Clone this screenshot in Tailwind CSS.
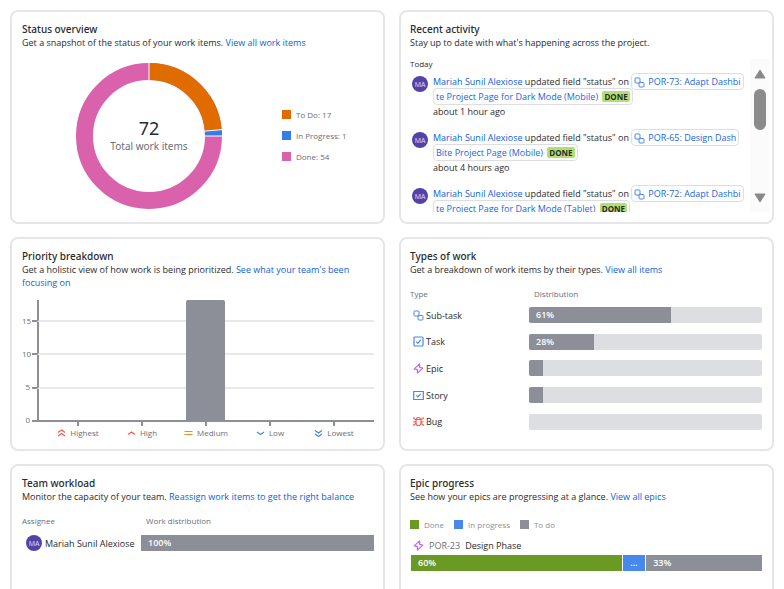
<!DOCTYPE html>
<html lang="en">
<head>
<meta charset="utf-8">
<meta name="viewport" content="width=device-width, initial-scale=1">
<title>Project summary</title>
<script src="https://cdn.jsdelivr.net/npm/@tailwindcss/browser@4"></script>
</head>
<body class="bg-white font-['Open_Sans','Noto_Sans',sans-serif] text-[9px] leading-[13px] text-[#292a2e]">
<svg class="hidden" aria-hidden="true">
  <symbol id="subtask" viewBox="0 0 11 11"><g fill="none" stroke="#4688ec"><rect x="1" y="1" width="5" height="5" rx="1"/><rect x="5" y="5.500" width="5" height="4.500" rx="1"/></g></symbol>
  <symbol id="task" viewBox="0 0 11 11"><g fill="none" stroke="#4688ec" stroke-width="1.200"><rect x="1" y="1" width="9" height="9" rx="1"/><path d="M3.200 5.600 4.900 7.300 7.800 3.700"/></g></symbol>
  <symbol id="epic" viewBox="0 0 11 11"><path d="M6.600 .9 1.200 5.900 4.400 6.700V10.100L9.800 5.100 6.600 4.300Z" fill="none" stroke="#bf63f3" stroke-width="1.200" stroke-linejoin="round"/></symbol>
  <symbol id="story" viewBox="0 0 11 11"><g fill="none" stroke="#4688ec" stroke-width="1.200"><path d="M.7 1.500H10.300V9.500H.7Z"/><path d="M3.400 5.400 4.900 6.900 7.600 3.900"/></g></symbol>
  <symbol id="bug" viewBox="0 0 11 11"><g fill="none" stroke="#f15b50" stroke-width="1.200"><path d="M3 3.500H8V7.500L6.700 9.500H4.300L3 7.500ZM3.500 3.500Q3.500 1.500 5.500 1.500T7.500 3.500M.8 1.200V2.500L3 3.800M10.200 1.200V2.500L8 3.800M.5 5.800H3M8 5.800H10.500M.8 10V8.800L3 7.500M10.200 10V8.800L8 7.500"/></g></symbol>
</svg>

<main class="grid h-screen auto-rows-[214px] grid-cols-2 gap-x-[14px] gap-y-[13px] overflow-hidden p-[10px]">

  <section class="flex flex-col rounded-lg border-2 border-[#e6e6e8] px-[10px] py-[11px]">
    <h2 class="font-['Noto_Sans',sans-serif] text-[10px] leading-[13px] font-medium">Status overview</h2>
    <p>Get a snapshot of the status of your work items. <a href="#" class="font-medium text-[#0c5fd8]">View all work items</a></p>
    <div class="mt-[14px] flex items-center gap-[60px] pl-[54px]">
      <div class="grid place-items-center">
        <svg class="col-start-1 row-start-1 size-[146px]" viewBox="0 0 146 146" role="img" aria-label="Work items by status">
          <circle cx="73" cy="73" r="64.500" fill="none" stroke="#da62ac" stroke-width="17"/>
          <path d="M73 8.500A64.500 64.500 0 0 1 137.250 67.380" fill="none" stroke="#e06c00" stroke-width="17"/>
          <path d="M137.250 67.380A64.500 64.500 0 0 1 137.500 73" fill="none" stroke="#357de8" stroke-width="17"/>
          <path d="M73 0V18M128 73H146M128 68.200 146 66.600" stroke="#fff" fill="none"/>
        </svg>
        <div class="col-start-1 row-start-1 text-center font-['Noto_Sans',sans-serif]">
          <div class="text-lg leading-5">72</div>
          <div class="text-[10px] leading-4 text-[#6b6e76]">Total work items</div>
        </div>
      </div>
      <ul class="mb-[2px] flex flex-col gap-2 text-[8px] text-[#6b6e76]">
        <li class="flex items-center gap-[5px]"><span class="size-[9px] bg-[#e06c00]"></span>To Do: 17</li>
        <li class="flex items-center gap-[5px]"><span class="size-[9px] bg-[#357de8]"></span>In Progress: 1</li>
        <li class="flex items-center gap-[5px]"><span class="size-[9px] bg-[#da62ac]"></span>Done: 54</li>
      </ul>
    </div>
  </section>

  <section class="flex flex-col rounded-lg border-2 border-[#e6e6e8] pt-[11px] pr-[2px] pb-[10px] pl-[9px]">
    <h2 class="font-['Noto_Sans',sans-serif] text-[10px] leading-[13px] font-medium">Recent activity</h2>
    <p>Stay up to date with what's happening across the project.</p>
    <div class="mt-[10px] flex min-h-0 flex-1">
      <div class="min-w-0 flex-1 overflow-hidden whitespace-nowrap">
        <h3 class="text-[8px] leading-[10px] font-medium">Today</h3>
        <ul class="mt-[5px] flex flex-col gap-[11px] leading-[15px]">
          <li class="flex gap-[5px]">
            <span class="mt-[2px] ml-[2px] grid size-4 shrink-0 place-items-center rounded-full bg-[#5243aa] text-[7px] leading-none text-white/80">MA</span>
            <div><a href="#" class="font-medium text-[#0c5fd8]">Mariah Sunil Alexiose</a> updated field "status" on <a href="#" class="rounded-sm border border-[#dddee1] box-decoration-clone px-[2px] py-px text-[#1868db]"><svg class="mr-[3px] inline size-[11px]"><use href="#subtask"/></svg>POR-73: Adapt Dashbi<br>te Project Page for Dark Mode (Mobile) <span class="ml-[2px] rounded-xs bg-[#b3df72] px-[2px] text-[8px] font-bold text-[#292a2e]">DONE</span></a><div>about 1 hour ago</div></div>
          </li>
          <li class="flex gap-[5px]">
            <span class="mt-[2px] ml-[2px] grid size-4 shrink-0 place-items-center rounded-full bg-[#5243aa] text-[7px] leading-none text-white/80">MA</span>
            <div><a href="#" class="font-medium text-[#0c5fd8]">Mariah Sunil Alexiose</a> updated field "status" on <a href="#" class="rounded-sm border border-[#dddee1] box-decoration-clone px-[2px] py-px text-[#1868db]"><svg class="mr-[3px] inline size-[11px]"><use href="#subtask"/></svg>POR-65: Design Dash<br>Bite Project Page (Mobile) <span class="ml-[2px] rounded-xs bg-[#b3df72] px-[2px] text-[8px] font-bold text-[#292a2e]">DONE</span></a><div>about 4 hours ago</div></div>
          </li>
          <li class="flex gap-[5px]">
            <span class="mt-[2px] ml-[2px] grid size-4 shrink-0 place-items-center rounded-full bg-[#5243aa] text-[7px] leading-none text-white/80">MA</span>
            <div><a href="#" class="font-medium text-[#0c5fd8]">Mariah Sunil Alexiose</a> updated field "status" on <a href="#" class="rounded-sm border border-[#dddee1] box-decoration-clone px-[2px] py-px text-[#1868db]"><svg class="mr-[3px] inline size-[11px]"><use href="#subtask"/></svg>POR-72: Adapt Dashbi<br>te Project Page for Dark Mode (Tablet) <span class="ml-[2px] rounded-xs bg-[#b3df72] px-[2px] text-[8px] font-bold text-[#292a2e]">DONE</span></a></div>
          </li>
        </ul>
      </div>
      <div class="flex w-5 shrink-0 flex-col items-center bg-[#fbfbfb] pt-[10px] pb-[9px]" aria-hidden="true">
        <svg class="h-[10px] w-3" viewBox="0 0 12 10"><path d="M6 1 11 9H1Z" fill="#888" stroke="#888" stroke-linejoin="round"/></svg>
        <span class="mt-[10px] h-[41px] w-3 rounded-full bg-[#8b8b8b]"></span>
        <svg class="mt-auto h-[10px] w-3" viewBox="0 0 12 10"><path d="M6 9 11 1H1Z" fill="#888" stroke="#888" stroke-linejoin="round"/></svg>
      </div>
    </div>
  </section>

  <section class="flex flex-col rounded-lg border-2 border-[#e6e6e8] py-[11px] pr-[9px] pl-[10px]">
    <h2 class="font-['Noto_Sans',sans-serif] text-[10px] leading-[13px] font-medium">Priority breakdown</h2>
    <p>Get a holistic view of how work is being prioritized. <a href="#" class="font-medium text-[#0c5fd8]">See what your team's been focusing on</a></p>
    <div class="mt-[11px] grid grid-cols-[8px_1fr] gap-x-[2px] text-[8px] text-[#6b6e76]">
      <div class="flex flex-col gap-5 pt-[14px] text-right">
        <span>15</span><span>10</span><span>5</span><span>0</span>
      </div>
      <div>
        <div class="grid">
          <div class="col-start-1 row-start-1 grid grid-cols-[5px_1fr] grid-rows-[22px_33px_34px_33px]">
            <span></span><span class="border-b-2 border-l-2 border-b-[#e8e8ea] border-l-[#8c8f97]"></span>
            <span class="-mt-[2px] border-t-2 border-[#8c8f97]"></span><span class="border-b-2 border-l-2 border-b-[#e8e8ea] border-l-[#8c8f97]"></span>
            <span class="-mt-[2px] border-t-2 border-[#8c8f97]"></span><span class="border-b-2 border-l-2 border-b-[#e8e8ea] border-l-[#8c8f97]"></span>
            <span class="-mt-[2px] border-y-2 border-[#8c8f97]"></span><span class="border-b-2 border-l-2 border-[#8c8f97]"></span>
          </div>
          <div class="col-start-1 row-start-1 flex items-end justify-center pb-[2px] pl-[5px]">
            <span class="h-full w-[39px] rounded-t-xs bg-[#8c8f97]"></span>
          </div>
        </div>
        <ul class="grid grid-cols-5 pr-2 pl-[14px] text-center">
          <li class="flex flex-col items-center"><span class="h-1 w-[2px] bg-[#8c8f97]"></span><span class="flex items-center gap-1"><svg class="size-[9px]" viewBox="0 0 9 9"><path d="M1 4.500 4.500 2 8 4.500M1 8 4.500 5.500 8 8" fill="none" stroke="#f15b50" stroke-width="1.200"/></svg>Highest</span></li>
          <li class="flex flex-col items-center"><span class="h-1 w-[2px] bg-[#8c8f97]"></span><span class="flex items-center gap-1"><svg class="size-[9px]" viewBox="0 0 9 9"><path d="M1 6.500 4.500 4 8 6.500" fill="none" stroke="#f15b50" stroke-width="1.200"/></svg>High</span></li>
          <li class="flex flex-col items-center"><span class="h-1 w-[2px] bg-[#8c8f97]"></span><span class="flex items-center gap-1"><svg class="size-[9px]" viewBox="0 0 9 9"><path d="M.5 3.500H8.500M.5 6.500H8.500" fill="none" stroke="#f18d13" stroke-width="1.200"/></svg>Medium</span></li>
          <li class="flex flex-col items-center"><span class="h-1 w-[2px] bg-[#8c8f97]"></span><span class="flex items-center gap-1"><svg class="size-[9px]" viewBox="0 0 9 9"><path d="M1 4 4.500 6.500 8 4" fill="none" stroke="#4688ec" stroke-width="1.200"/></svg>Low</span></li>
          <li class="flex flex-col items-center"><span class="h-1 w-[2px] bg-[#8c8f97]"></span><span class="flex items-center gap-1"><svg class="size-[9px]" viewBox="0 0 9 9"><path d="M1 2.500 4.500 5 8 2.500M1 6 4.500 8.500 8 6" fill="none" stroke="#4688ec" stroke-width="1.200"/></svg>Lowest</span></li>
        </ul>
      </div>
    </div>
  </section>

  <section class="flex flex-col rounded-lg border-2 border-[#e6e6e8] py-[11px] pr-[10px] pl-[9px]">
    <h2 class="font-['Noto_Sans',sans-serif] text-[10px] leading-[13px] font-medium">Types of work</h2>
    <p>Get a breakdown of work items by their types. <a href="#" class="font-medium text-[#0c5fd8]">View all items</a></p>
    <table class="mt-[11px] h-[148px] w-full">
      <thead class="text-left align-top text-[8px] leading-[13px] text-[#6b6e76]">
        <tr class="h-[15px]"><th class="w-[119px] font-medium">Type</th><th class="pl-[5px] font-medium">Distribution</th></tr>
      </thead>
      <tbody>
        <tr><td><span class="flex items-center gap-[2px] pl-[3px]"><svg class="size-[11px]"><use href="#subtask"/></svg>Sub-task</span></td><td><div class="h-4 overflow-hidden rounded-xs bg-[#dddee1]"><div class="h-4 bg-[#8c8f97] pl-[7px] leading-4 font-semibold text-white" style="width:61%">61%</div></div></td></tr>
        <tr><td><span class="flex items-center gap-[2px] pl-[3px]"><svg class="size-[11px]"><use href="#task"/></svg>Task</span></td><td><div class="h-4 overflow-hidden rounded-xs bg-[#dddee1]"><div class="h-4 bg-[#8c8f97] pl-[7px] leading-4 font-semibold text-white" style="width:28%">28%</div></div></td></tr>
        <tr><td><span class="flex items-center gap-[2px] pl-[3px]"><svg class="size-[11px]"><use href="#epic"/></svg>Epic</span></td><td><div class="h-4 overflow-hidden rounded-xs bg-[#dddee1]"><div class="h-4 bg-[#8c8f97]" style="width:6%"></div></div></td></tr>
        <tr><td><span class="flex items-center gap-[2px] pl-[3px]"><svg class="size-[11px]"><use href="#story"/></svg>Story</span></td><td><div class="h-4 overflow-hidden rounded-xs bg-[#dddee1]"><div class="h-4 bg-[#8c8f97]" style="width:6%"></div></div></td></tr>
        <tr><td><span class="flex items-center gap-[2px] pl-[3px]"><svg class="size-[11px]"><use href="#bug"/></svg>Bug</span></td><td><div class="h-4 rounded-xs bg-[#dddee1]"></div></td></tr>
      </tbody>
    </table>
  </section>

  <section class="flex flex-col rounded-lg border-2 border-[#e6e6e8] py-[11px] pr-[9px] pl-[10px]">
    <h2 class="font-['Noto_Sans',sans-serif] text-[10px] leading-[13px] font-medium">Team workload</h2>
    <p>Monitor the capacity of your team. <a href="#" class="font-medium text-[#0c5fd8]">Reassign work items to get the right balance</a></p>
    <table class="mt-[11px] w-full">
      <thead class="text-left text-[8px] leading-[13px] text-[#6b6e76]">
        <tr><th class="w-[119px] font-medium">Assignee</th><th class="pl-[5px] font-medium">Work distribution</th></tr>
      </thead>
      <tbody>
        <tr class="h-8"><td><span class="flex items-center gap-[3px] pl-1 whitespace-nowrap"><span class="grid size-4 place-items-center rounded-full bg-[#5243aa] text-[7px] leading-none text-white/80">MA</span>Mariah Sunil Alexiose</span></td><td><div class="h-4 bg-[#8c8f97] pl-[7px] leading-4 font-semibold text-white">100%</div></td></tr>
      </tbody>
    </table>
  </section>

  <section class="flex flex-col rounded-lg border-2 border-[#e6e6e8] py-[11px] pr-[10px] pl-[9px]">
    <h2 class="font-['Noto_Sans',sans-serif] text-[10px] leading-[13px] font-medium">Epic progress</h2>
    <p>See how your epics are progressing at a glance. <a href="#" class="font-medium text-[#0c5fd8]">View all epics</a></p>
    <ul class="mt-[15px] flex gap-[10px] text-[8px] text-[#8c8f97]">
      <li class="flex items-center gap-[5px]"><span class="size-[9px] bg-[#6a9a23]"></span>Done</li>
      <li class="flex items-center gap-[5px]"><span class="size-[9px] bg-[#4688ec]"></span>In progress</li>
      <li class="flex items-center gap-[5px]"><span class="size-[9px] bg-[#8c8f97]"></span>To do</li>
    </ul>
    <div class="mt-2 flex items-center gap-[5px] pl-[3px]"><svg class="size-[11px]"><use href="#epic"/></svg><span class="text-[#6b6e76]">POR-23</span><span>Design Phase</span></div>
    <div class="mt-[3px] flex h-4 gap-px pl-px leading-4 font-semibold text-white">
      <div class="bg-[#6a9a23] pl-[7px]" style="width:60%">60%</div>
      <div class="flex-1 bg-[#4688ec] text-center">...</div>
      <div class="bg-[#8c8f97] pl-[7px]" style="width:33%">33%</div>
    </div>
  </section>
</main>
</body>
</html>
